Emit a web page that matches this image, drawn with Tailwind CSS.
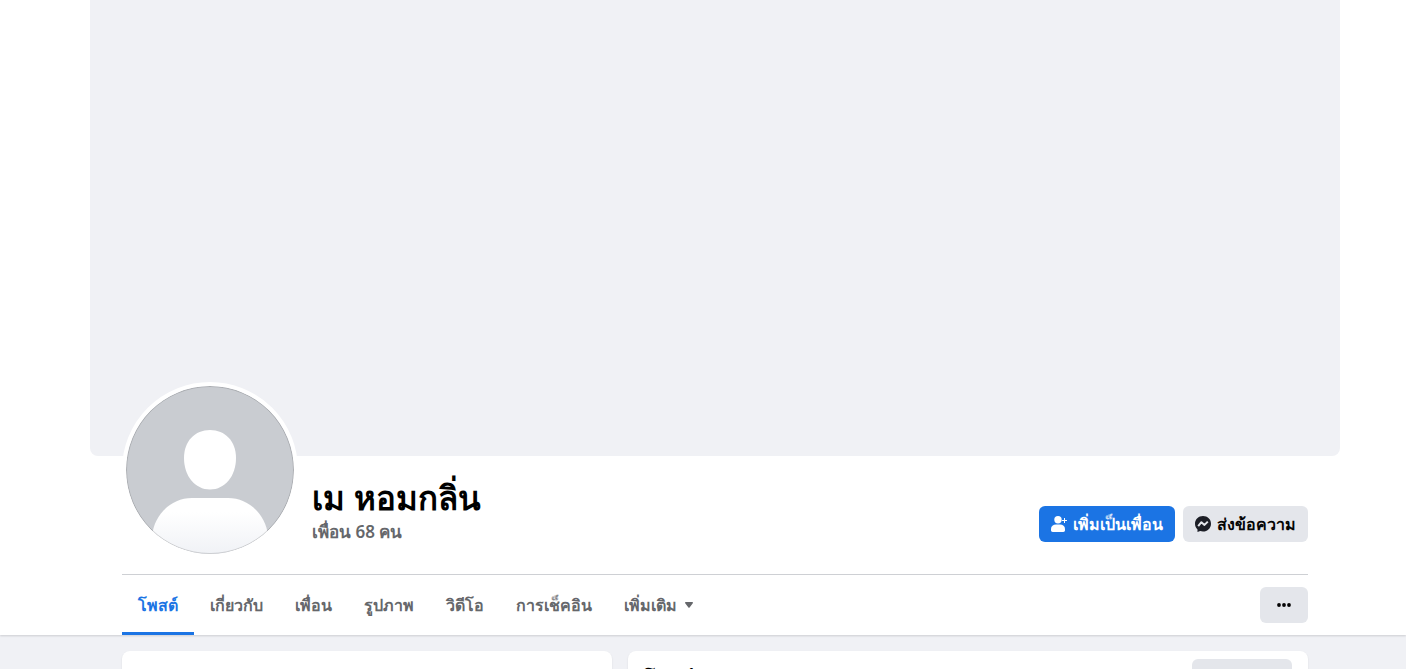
<!DOCTYPE html>
<html lang="th">
<head>
  <meta charset="UTF-8" />
  <meta name="viewport" content="width=device-width, initial-scale=1.0" />
  <title>เม หอมกลิ่น</title>
  <script src="https://cdn.jsdelivr.net/npm/@tailwindcss/browser@4"></script>
</head>
<body class="h-screen overflow-hidden bg-[#f0f1f5] font-['Noto_Sans',sans-serif] text-[#050505]">
  <header class="bg-white pl-6 shadow-[0_1px_2px_rgba(0,0,0,0.15)]">
    <div class="mx-auto max-w-[1250px]">
      <!-- Cover -->
      <div class="h-[456px] rounded-b-lg bg-[#f0f1f5]"></div>

      <div class="px-8">
        <!-- Avatar, name, actions -->
        <div class="-mt-[74px] flex items-end pb-4">
          <svg class="size-44 shrink-0 rounded-full border-4 border-white" viewBox="0 0 168 168" role="img" aria-label="เม หอมกลิ่น">
            <defs>
              <linearGradient id="body" x1="0" y1="0" x2="0" y2="1">
                <stop offset="0.25" stop-color="#ffffff" />
                <stop offset="1" stop-color="#f0f2f6" />
              </linearGradient>
              <clipPath id="round"><circle cx="84" cy="84" r="84" /></clipPath>
            </defs>
            <g clip-path="url(#round)">
              <rect width="168" height="168" fill="#c9ccd1" />
              <path d="M84 44c15 0 26 11 26 28 0 18-11 31.500-26 31.500S58 90 58 72c0-17 11-28 26-28z" fill="#fff" />
              <path d="M26 150c2-21 19-38 40-38h36c21 0 38 17 40 38v18H26z" fill="url(#body)" />
            </g>
            <circle cx="84" cy="84" r="83.500" fill="none" stroke="#000" stroke-opacity="0.15" />
          </svg>

          <div class="ml-3.5 flex-1 pb-3">
            <h1 class="text-[33px] leading-10 font-bold text-black">เม หอมกลิ่น</h1>
            <a href="#" class="block text-[17px] leading-7 font-semibold text-[#65676b]">เพื่อน 68 คน</a>
          </div>

          <div class="flex gap-2 pb-4">
            <button class="flex h-9 items-center gap-1.5 rounded-md bg-[#1b74e4] px-3 text-base font-bold text-white">
              <svg class="size-4" viewBox="0 0 16 16" fill="currentColor" aria-hidden="true">
                <circle cx="7" cy="3.700" r="3.700" />
                <path d="M0 13c0-3 2.200-4.500 5-4.500h4c2.800 0 5 1.500 5 4.500v1.300c0 1-.7 1.700-1.700 1.700H1.700C.7 16 0 15.300 0 14.300z" />
                <path d="M13.500 2v5M11 4.500h5" stroke="currentColor" />
              </svg>
              เพิ่มเป็นเพื่อน
            </button>
            <button class="flex h-9 items-center gap-1.5 rounded-md bg-[#e4e6eb] px-3 text-base font-bold">
              <svg class="size-4" viewBox="0 0 16 16" aria-hidden="true">
                <path d="M8 0C3.500 0 0 3.300 0 7.700c0 2.300 1 4.300 2.500 5.700V16l2.700-1c.9.300 1.800.5 2.800.5 4.500 0 8-3.300 8-7.800S12.500 0 8 0z" fill="#1c1e26" />
                <path d="M3.200 10.200l3.200-4 3.100 2.700 3.300-3.300" fill="none" stroke="#e4e6eb" stroke-width="2" stroke-linejoin="round" />
              </svg>
              ส่งข้อความ
            </button>
          </div>
        </div>

        <!-- Tabs -->
        <nav class="flex h-[61px] items-center border-t border-[#ced0d4] text-base font-bold text-[#65676b]">
          <a href="#" class="flex h-full items-center border-b-3 border-[#1b74e4] px-4 pt-[3px] text-[#1b74e4]" aria-current="page">โพสต์</a>
          <a href="#" class="px-4">เกี่ยวกับ</a>
          <a href="#" class="px-4">เพื่อน</a>
          <a href="#" class="px-4">รูปภาพ</a>
          <a href="#" class="px-4">วิดีโอ</a>
          <a href="#" class="px-4">การเช็คอิน</a>
          <button class="flex items-center gap-2 px-4">
            เพิ่มเติม
            <svg class="h-1.5 w-2" viewBox="0 0 8 6" fill="currentColor" aria-hidden="true"><path d="M.8 0h6.400c.8 0 1 .7.600 1.200L4.600 5.500c-.3.400-.9.400-1.200 0L.2 1.200C-.2.700 0 0 .8 0z" /></svg>
          </button>
          <button class="ml-auto flex h-9 w-12 items-center justify-center rounded-md bg-[#e4e6eb] text-[#050505]" aria-label="เพิ่มเติม">
            <svg class="h-1 w-3.5" viewBox="0 0 14 4" fill="currentColor" aria-hidden="true">
              <circle cx="2" cy="2" r="1.900" /><circle cx="7" cy="2" r="1.900" /><circle cx="12" cy="2" r="1.900" />
            </svg>
          </button>
        </nav>
      </div>
    </div>
  </header>

  <main class="pl-6">
    <div class="mx-auto flex max-w-[1250px] gap-4 px-8 pt-4">
      <section class="h-40 w-[490px] rounded-lg bg-white shadow-[0_1px_2px_rgba(0,0,0,0.1)]"></section>
      <section class="flex h-40 flex-1 items-start justify-between rounded-lg bg-white px-4 pt-2 shadow-[0_1px_2px_rgba(0,0,0,0.1)]">
        <h2 class="text-xl leading-10 font-bold text-black">โพสต์</h2>
        <button class="flex h-9 items-center rounded-md bg-[#e4e6eb] px-[22px] text-base font-bold">ตัวกรอง</button>
      </section>
    </div>
  </main>
</body>
</html>
